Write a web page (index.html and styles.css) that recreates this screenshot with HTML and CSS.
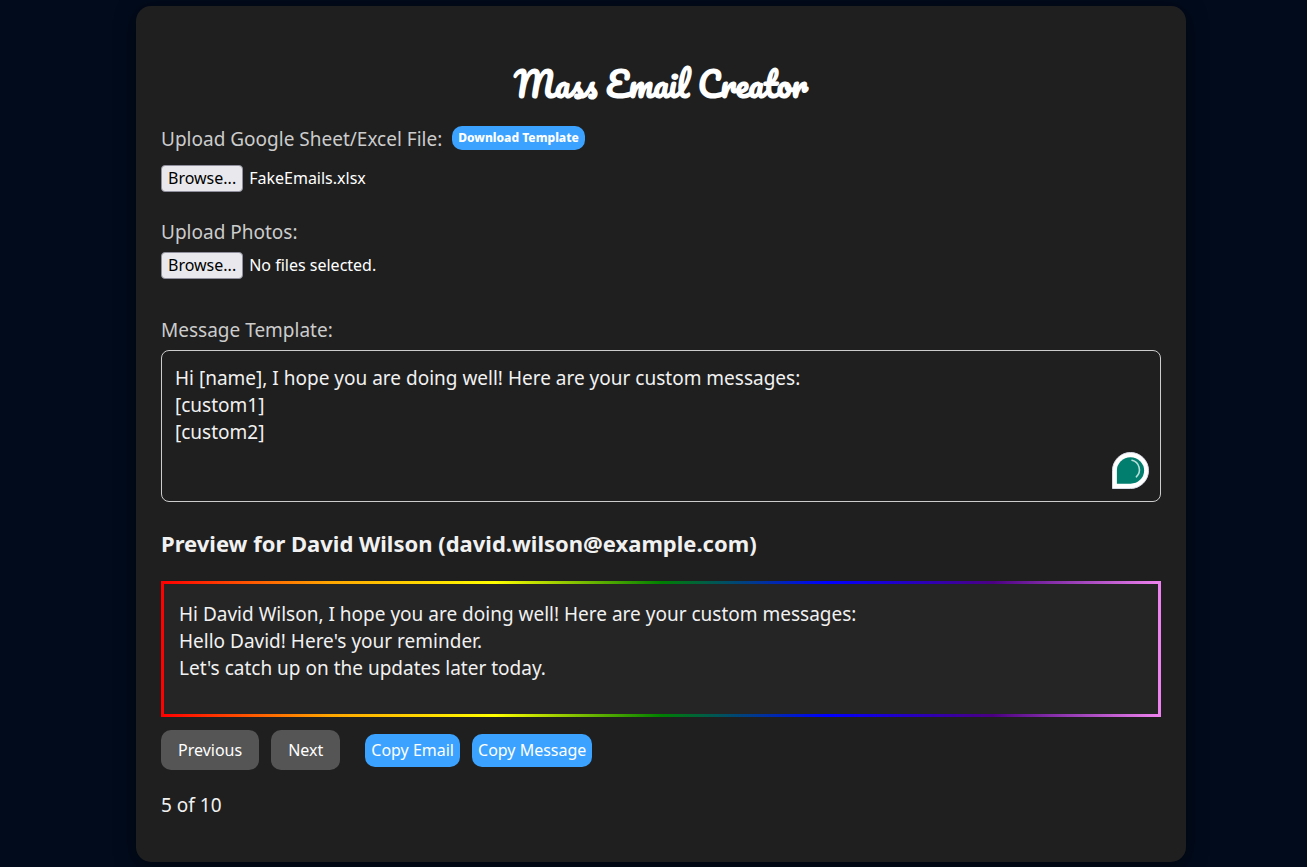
FILE: index.html
```html
<!DOCTYPE html>
<html lang="en">
<head>
<meta charset="utf-8">
<title>Mass Email Creator</title>
<link rel="stylesheet" href="styles.css">
</head>
<body>
<main class="card">
  <h1 class="title">Mass Email Creator</h1>

  <section class="field field-sheet">
    <div class="label-row">
      <label class="label" for="sheet">Upload Google Sheet/Excel File:</label>
      <button class="pill" type="button">Download Template</button>
    </div>
    <div class="file-row">
      <input class="file-input" id="sheet" type="file" accept=".xlsx,.csv">
      <button class="browse" type="button">Browse...</button>
      <span class="file-name">FakeEmails.xlsx</span>
    </div>
  </section>

  <section class="field field-photos">
    <label class="label" for="photos">Upload Photos:</label>
    <div class="file-row">
      <input class="file-input" id="photos" type="file" accept="image/*" multiple>
      <button class="browse" type="button">Browse...</button>
      <span class="file-name">No files selected.</span>
    </div>
  </section>

  <section class="field">
    <label class="label" for="message">Message Template:</label>
    <div class="message-wrap">
      <textarea class="message" id="message" spellcheck="false">Hi [name], I hope you are doing well! Here are your custom messages:
[custom1]
[custom2]</textarea>
      <svg class="assistant" viewBox="0 0 38 38" aria-hidden="true">
        <path d="M.5 37.500V19A18.500 18.500 0 1 1 19 37.500Z" fill="#fff" stroke="#d9dde8"/>
        <path d="M5 32.500V19A14 13.500 0 1 1 19 32.500Z" fill="#027e6f"/>
        <path d="M20.500 8.500A10 10 0 0 1 25 25.500" fill="none" stroke="#b8e0da" stroke-width="1.600" stroke-linecap="round"/>
      </svg>
    </div>
  </section>

  <section class="preview">
    <h2 class="preview-title">Preview for David Wilson (david.wilson@example.com)</h2>
    <div class="preview-box">Hi David Wilson, I hope you are doing well! Here are your custom messages:
Hello David! Here's your reminder.
Let's catch up on the updates later today.</div>
    <div class="actions">
      <div class="group">
        <button class="nav" type="button">Previous</button>
        <button class="nav" type="button">Next</button>
      </div>
      <div class="group">
        <button class="copy" type="button">Copy Email</button>
        <button class="copy" type="button">Copy Message</button>
      </div>
    </div>
    <p class="counter">5 of 10</p>
  </section>
</main>
</body>
</html>
```
FILE: styles.css
```css
* {
  box-sizing: border-box;
}

body {
  margin: 0;
  padding: 6px 15px 5px 30px;
  background: #020b1c;
  color: #f1f1f1;
  font: 19px/27px "Segoe UI", "Noto Sans", sans-serif;
}

button {
  border: 0;
  font-family: inherit;
  cursor: pointer;
}

.card {
  max-width: 1050px;
  margin: 0 auto;
  padding: 55px 25px 43px;
  border-radius: 15px;
  background: #1f1f1f;
  box-shadow: 0 4px 20px rgba(0, 0, 0, 0.5);
}

.title {
  margin: 0 0 19px;
  color: #fff;
  font: bold 33px/46px Pacifico, cursive;
  text-align: center;
}

.field {
  margin-bottom: 27px;
}

.field-photos {
  margin-bottom: 38px;
}

.label {
  display: block;
  margin-bottom: 6px;
  color: #ccc;
}

.label-row {
  display: flex;
  align-items: flex-start;
  gap: 10px;
  margin-bottom: 12px;
}

.label-row .label {
  margin: 0;
}

.pill {
  padding: 0 6px;
  border-radius: 10px;
  background: #3ba3ff;
  color: #fff;
  font-size: 12px;
  font-weight: 800;
  line-height: 24px;
}

.file-row {
  position: relative;
  display: flex;
  align-items: center;
  gap: 6px;
  font-size: 16px;
}

.file-input {
  position: absolute;
  width: 1px;
  height: 1px;
  opacity: 0;
  pointer-events: none;
}

.browse {
  padding: 0 6px;
  border: 1px solid #8f8f9d;
  border-radius: 4px;
  background: #e9e9ed;
  color: #000;
  font-size: 16px;
  line-height: 25px;
}

.file-name {
  color: #fff;
}

.message-wrap {
  position: relative;
}

.message {
  display: block;
  width: 100%;
  height: 152px;
  padding: 14px 13px;
  border: 1px solid #ccc;
  border-radius: 8px;
  background: #1f1f1f;
  color: #f1f1f1;
  font: inherit;
  resize: none;
}

.assistant {
  position: absolute;
  right: 12px;
  bottom: 13px;
  width: 37px;
  height: 37px;
}

.preview-title {
  margin: 0 0 24px;
  font-size: 22px;
  font-weight: 700;
  line-height: 28px;
}

.preview-box {
  min-height: 136px;
  padding: 17px 15px;
  border: 3px solid;
  border-image: linear-gradient(to right, red, orange, yellow, green, blue, indigo, violet) 1;
  background: #252525;
  white-space: pre-line;
}

.actions {
  display: flex;
  align-items: center;
  gap: 25px;
  margin-top: 13px;
}

.group {
  display: flex;
  gap: 12px;
}

.nav {
  padding: 0 17px;
  border-radius: 10px;
  background: #555;
  color: #fff;
  font-size: 16px;
  line-height: 40px;
}

.copy {
  padding: 0 6px;
  border-radius: 10px;
  background: #3ba3ff;
  color: #fff;
  font-size: 16px;
  line-height: 33px;
}

.counter {
  margin: 22px 0 0;
}
```
